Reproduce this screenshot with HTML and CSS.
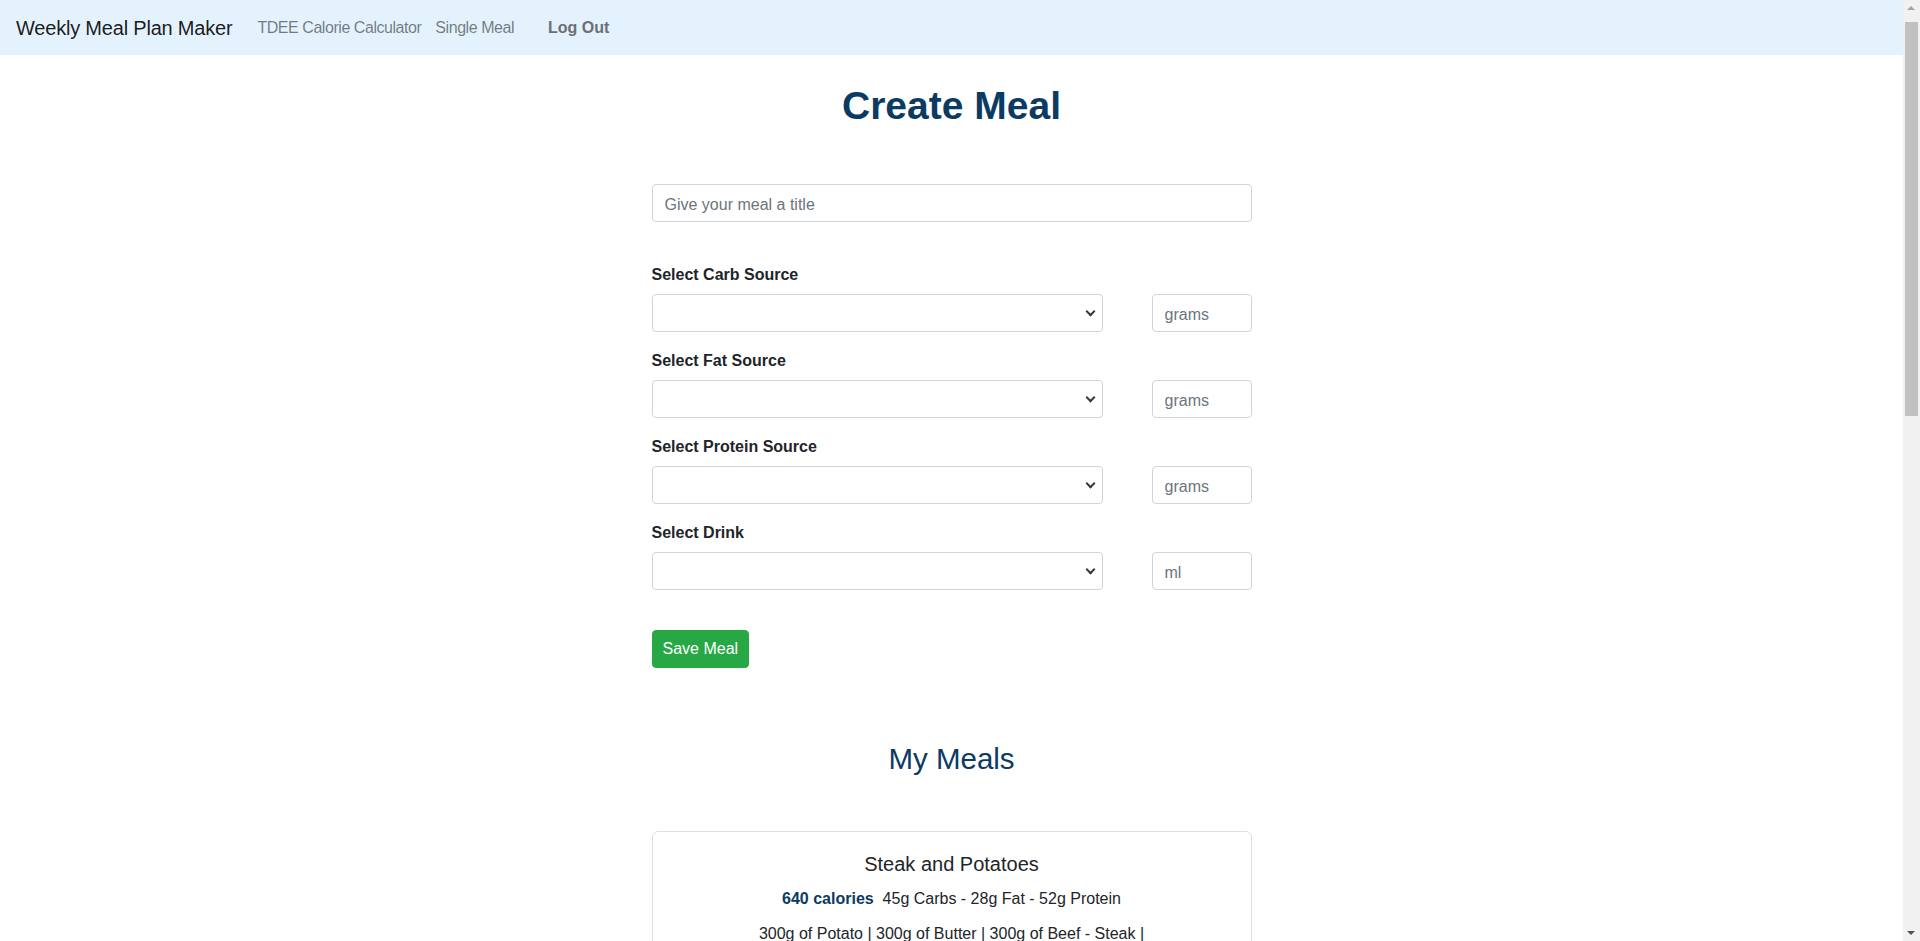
FILE: index.html
```html
<!DOCTYPE html>
<html lang="en">
<head>
<meta charset="utf-8">
<title>Weekly Meal Plan Maker</title>
<link rel="stylesheet" href="styles.css">
</head>
<body>
<nav class="navbar">
  <a class="brand" href="#">Weekly Meal Plan Maker</a>
  <a class="nav-link" href="#">TDEE Calorie Calculator</a>
  <a class="nav-link" href="#">Single Meal</a>
  <a class="nav-link logout" href="#">Log Out</a>
</nav>

<main class="content">
  <h1 class="page-title">Create Meal</h1>

  <form class="meal-form">
    <input class="form-control title-input" type="text" placeholder="Give your meal a title">

    <div class="form-group first">
      <label class="form-label">Select Carb Source</label>
      <div class="form-row">
        <div class="select-wrap"><select class="form-control select"><option></option></select></div>
        <input class="form-control amount" type="text" placeholder="grams">
      </div>
    </div>

    <div class="form-group">
      <label class="form-label">Select Fat Source</label>
      <div class="form-row">
        <div class="select-wrap"><select class="form-control select"><option></option></select></div>
        <input class="form-control amount" type="text" placeholder="grams">
      </div>
    </div>

    <div class="form-group">
      <label class="form-label">Select Protein Source</label>
      <div class="form-row">
        <div class="select-wrap"><select class="form-control select"><option></option></select></div>
        <input class="form-control amount" type="text" placeholder="grams">
      </div>
    </div>

    <div class="form-group">
      <label class="form-label">Select Drink</label>
      <div class="form-row">
        <div class="select-wrap"><select class="form-control select"><option></option></select></div>
        <input class="form-control amount" type="text" placeholder="ml">
      </div>
    </div>

    <button class="btn-save" type="button">Save Meal</button>
  </form>

  <h2 class="section-title">My Meals</h2>

  <div class="meal-list">
    <div class="card">
      <h5 class="card-title">Steak and Potatoes</h5>
      <p class="macros"><span class="calories">640 calories</span>&nbsp; 45g Carbs - 28g Fat - 52g Protein</p>
      <p class="ingredients">300g of Potato | 300g of Butter | 300g of Beef - Steak |</p>
      <button class="btn-delete" type="button">Delete</button>
    </div>
    <div class="card">
      <h5 class="card-title">Chicken and Rice</h5>
      <p class="macros"><span class="calories">520 calories</span>&nbsp; 60g Carbs - 8g Fat - 48g Protein</p>
      <p class="ingredients">200g of Rice | 10g of Olive Oil | 200g of Chicken Breast |</p>
      <button class="btn-delete" type="button">Delete</button>
    </div>
    <div class="card">
      <h5 class="card-title">Oats Breakfast</h5>
      <p class="macros"><span class="calories">450 calories</span>&nbsp; 55g Carbs - 14g Fat - 25g Protein</p>
      <p class="ingredients">80g of Oats | 20g of Peanut Butter | 250ml of Milk |</p>
      <button class="btn-delete" type="button">Delete</button>
    </div>
  </div>
</main>

<div class="scrollbar" aria-hidden="true">
  <div class="sb-arrow sb-up"></div>
  <div class="sb-track"><div class="sb-thumb"></div></div>
  <div class="sb-arrow sb-down"></div>
</div>
</body>
</html>
```

FILE: styles.css
```css
* {
  box-sizing: border-box;
}

html, body {
  margin: 0;
  padding: 0;
}

body {
  padding-right: 17px;
  font-family: "Segoe UI", "Liberation Sans", Arial, sans-serif;
  font-size: 16px;
  line-height: 1.5;
  color: #212529;
  background: #fff;
}

/* Navbar */
.navbar {
  display: flex;
  align-items: center;
  height: 55px;
  padding: 0 16px;
  background: #e3f2fd;
}

.brand {
  font-size: 20px;
  line-height: 30px;
  letter-spacing: -0.2px;
  color: rgba(0, 0, 0, 0.9);
  text-decoration: none;
  margin-right: 18px;
}

.nav-link {
  color: rgba(0, 0, 0, 0.5);
  text-decoration: none;
  padding: 8px 7px;
  font-size: 16px;
  line-height: 24px;
  letter-spacing: -0.45px;
}

.nav-link.logout {
  font-weight: 700;
  letter-spacing: 0;
  color: #6b7075;
  margin-left: 20px;
}

/* Main */
.content {
  width: 600px;
  margin: 0 auto;
  padding-bottom: 50px;
}

.page-title {
  margin: 27px 0 0;
  font-size: 39px;
  line-height: 48px;
  font-weight: 700;
  text-align: center;
  color: #0b3b63;
}

.meal-form {
  margin-top: 54px;
}

.form-control {
  display: block;
  height: 38px;
  padding: 8px 12px 4px;
  font-family: inherit;
  font-size: 16px;
  line-height: 24px;
  color: #495057;
  background: #fff;
  border: 1px solid #ced4da;
  border-radius: 4px;
  outline: none;
}

.form-control::placeholder {
  color: #6c757d;
  opacity: 1;
}

.title-input {
  width: 100%;
}

.form-group {
  margin-bottom: 16px;
}

.form-group.first {
  margin-top: 40px;
}

.form-label {
  display: block;
  font-weight: 700;
  font-size: 16px;
  line-height: 24px;
  margin-bottom: 8px;
  padding-top: 1px;
  height: 24px;
}

.form-row {
  display: flex;
  justify-content: space-between;
}

.select-wrap {
  position: relative;
  width: 451px;
}

.select-wrap::after {
  content: "";
  position: absolute;
  right: 9px;
  top: 14px;
  width: 5px;
  height: 5px;
  border-right: 2px solid #343a40;
  border-bottom: 2px solid #343a40;
  transform: rotate(45deg);
  pointer-events: none;
}

.select {
  width: 100%;
  -webkit-appearance: none;
  appearance: none;
}

.amount {
  width: 100px;
}

.btn-save {
  display: block;
  margin-top: 40px;
  height: 38px;
  padding: 6px 10px;
  font-family: inherit;
  font-size: 16px;
  line-height: 24px;
  color: #fff;
  background: #28a745;
  border: 1px solid #28a745;
  border-radius: 4px;
}

.section-title {
  margin: 72px 0 0;
  font-size: 29.5px;
  line-height: 38px;
  font-weight: 400;
  text-align: center;
  color: #0b3b63;
}

.meal-list {
  margin-top: 53px;
  display: flex;
  flex-direction: column;
  gap: 24px;
}

.card {
  border: 1px solid rgba(0, 0, 0, 0.125);
  border-radius: 6px;
  padding: 20px;
  text-align: center;
}

.card-title {
  margin: 0 0 11px;
  font-size: 20px;
  line-height: 24px;
  font-weight: 500;
  color: #212529;
}

.macros {
  margin: 0 0 11px;
}

.calories {
  font-weight: 700;
  color: #0b3b63;
}

.ingredients {
  margin: 0 0 16px;
}

.btn-delete {
  height: 38px;
  padding: 6px 12px;
  font-family: inherit;
  font-size: 16px;
  line-height: 24px;
  color: #fff;
  background: #dc3545;
  border: 1px solid #dc3545;
  border-radius: 4px;
}

/* Fake window scrollbar */
.scrollbar {
  position: fixed;
  top: 0;
  right: 0;
  width: 17px;
  height: 100%;
  display: flex;
  flex-direction: column;
  background: #f1f1f1;
  z-index: 10;
}

.sb-arrow {
  position: relative;
  height: 17px;
  flex: none;
}

.sb-up::after,
.sb-down::after {
  content: "";
  position: absolute;
  left: 4px;
  width: 0;
  height: 0;
  border-left: 4px solid transparent;
  border-right: 4px solid transparent;
}

.sb-up::after {
  top: 6px;
  border-bottom: 4px solid #a3a3a3;
}

.sb-down::after {
  bottom: 6px;
  border-top: 4px solid #505050;
}

.sb-track {
  flex: 1;
  padding: 5px 2px 0;
}

.sb-thumb {
  height: 394px;
  background: #c1c1c1;
}
```
